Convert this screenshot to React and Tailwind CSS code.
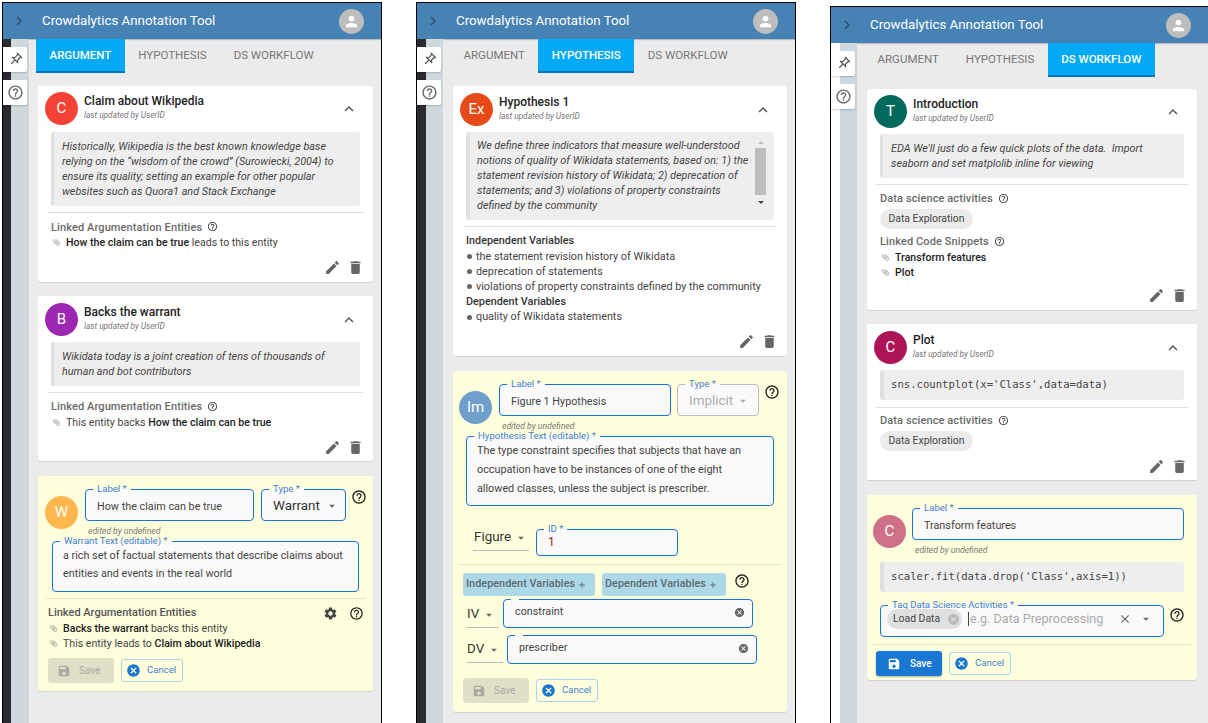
const P = {
  edit: "M3 17.25V21h3.75L17.81 9.94l-3.75-3.75L3 17.25zM20.71 7.04c.39-.39.39-1.02 0-1.41l-2.34-2.34c-.39-.39-1.02-.39-1.41 0l-1.83 1.83 3.75 3.75 1.83-1.83z",
  del: "M6 19c0 1.1.9 2 2 2h8c1.1 0 2-.9 2-2V7H6v12zM19 4h-3.5l-1-1h-5l-1 1H5v2h14V4z",
  save: "M17 3H5c-1.11 0-2 .9-2 2v14c0 1.1.89 2 2 2h14c1.1 0 2-.9 2-2V7l-4-4zm-5 16c-1.66 0-3-1.34-3-3s1.34-3 3-3 3 1.34 3 3-1.34 3-3 3zm3-10H5V5h10v4z",
  cancel: "M12 2C6.47 2 2 6.47 2 12s4.47 10 10 10 10-4.47 10-10S17.53 2 12 2zm5 13.59L15.59 17 12 13.41 8.41 17 7 15.59 10.59 12 7 8.41 8.41 7 12 10.59 15.59 7 17 8.41 13.41 12 17 15.59z",
  help: "M11 18h2v-2h-2v2zm1-16C6.48 2 2 6.48 2 12s4.48 10 10 10 10-4.48 10-10S17.52 2 12 2zm0 18c-4.41 0-8-3.59-8-8s3.59-8 8-8 8 3.59 8 8-3.59 8-8 8zm0-14c-2.21 0-4 1.79-4 4h2c0-1.1.9-2 2-2s2 .9 2 2c0 2-3 1.75-3 5h2c0-2.25 3-2.5 3-5 0-2.21-1.79-4-4-4z",
  gear: "M19.14 12.94c.04-.3.06-.61.06-.94 0-.32-.02-.64-.07-.94l2.03-1.58c.18-.14.23-.41.12-.61l-1.92-3.32c-.12-.22-.37-.29-.59-.22l-2.39.96c-.5-.38-1.03-.7-1.62-.94l-.36-2.54c-.04-.24-.24-.41-.48-.41h-3.84c-.24 0-.43.17-.47.41l-.36 2.54c-.59.24-1.13.57-1.62.94l-2.39-.96c-.22-.08-.47 0-.59.22L2.74 8.87c-.12.21-.08.47.12.61l2.03 1.58c-.05.3-.09.63-.09.94s.02.64.07.94l-2.03 1.58c-.18.14-.23.41-.12.61l1.92 3.32c.12.22.37.29.59.22l2.39-.96c.5.38 1.03.7 1.62.94l.36 2.54c.05.24.24.41.48.41h3.84c.24 0 .44-.17.47-.41l.36-2.54c.59-.24 1.13-.56 1.62-.94l2.39.96c.22.08.47 0 .59-.22l1.92-3.32c.12-.22.07-.47-.12-.61l-2.01-1.58zM12 15.6c-1.98 0-3.6-1.62-3.6-3.6s1.62-3.6 3.6-3.6 3.6 1.62 3.6 3.6-1.62 3.6-3.6 3.6z",
  clip: "M16.5 6v11.5c0 2.21-1.79 4-4 4s-4-1.79-4-4V5c0-1.38 1.12-2.5 2.5-2.5s2.5 1.12 2.5 2.5v10.5c0 .55-.45 1-1 1s-1-.45-1-1V6H10v9.5c0 1.38 1.12 2.5 2.5 2.5s2.5-1.12 2.5-2.5V5c0-2.21-1.79-4-4-4S7 2.79 7 5v12.5c0 3.04 2.46 5.5 5.5 5.5s5.5-2.46 5.5-5.5V6h-1.5z",
  person: "M12 12c2.21 0 4-1.79 4-4s-1.79-4-4-4-4 1.79-4 4 1.79 4 4 4zm0 2c-2.67 0-8 1.34-8 4v2h16v-2c0-2.66-5.33-4-8-4z",
  less: "M12 8l-6 6 1.41 1.41L12 10.83l4.59 4.58L18 14z",
  right: "M10 6L8.59 7.41 13.17 12l-4.58 4.59L10 18l6-6z",
  pin: "M14 4v5c0 1.12.37 2.16 1 3H9c.65-.86 1-1.9 1-3V4h4m3-2H7c-.55 0-1 .45-1 1s.45 1 1 1h1v5c0 1.66-1.34 3-3 3v2h5.97v7l1 1 1-1v-7H19v-2c-1.66 0-3-1.34-3-3V4h1c.55 0 1-.45 1-1s-.45-1-1-1z",
  drop: "M7 10l5 5 5-5z",
  close: "M19 6.41L17.59 5 12 10.59 6.41 5 5 6.41 10.59 12 5 17.59 6.41 19 12 13.41 17.59 19 19 17.59 13.41 12z",
  add: "M19 13h-6v6h-2v-6H5v-2h6V5h2v6h6v2z",
};

function I({ d, className = "" }) {
  return (
    <svg viewBox="0 0 24 24" className={"shrink-0 fill-current " + className}>
      <path d={P[d]} />
    </svg>
  );
}

function Phone({ rail, className, tabs, active, children }) {
  return (
    <div className={"flex flex-col border-l border-r border-t border-black bg-[#ebebeb] shrink-0 h-[730px] " + className}>
      <div className="flex items-center h-[36px] bg-[#4682b4] shrink-0 shadow-[0_1px_1px_rgba(0,0,0,0.2)]">
        <I d="right" className="w-[18px] h-[18px] ml-[7px] text-[#2f4f68]" />
        <div className="ml-[14px] text-[13.3px] text-white flex-1">Crowdalytics Annotation Tool</div>
        <div className="w-[25px] h-[25px] rounded-full bg-[#bdbdbd] flex items-center justify-center mr-[17px]">
          <I d="person" className="w-[17px] h-[17px] text-white" />
        </div>
      </div>
      <div className="flex flex-1 min-h-0">
        <div className={"w-[26px] shrink-0 flex flex-col gap-[8px] pt-[8px] " + rail}>
          <div className="w-[24px] h-[25px] bg-white rounded-r-[2px] shadow-[0_1px_2px_rgba(0,0,0,0.2)] flex items-center justify-center">
            <I d="pin" className="w-[15px] h-[15px] text-[#555] rotate-45" />
          </div>
          <div className="w-[24px] h-[25px] bg-white rounded-r-[2px] shadow-[0_1px_2px_rgba(0,0,0,0.2)] flex items-center justify-center">
            <I d="help" className="w-[17px] h-[17px] text-[#666]" />
          </div>
        </div>
        <div className="flex-1 min-w-0 flex flex-col">
          <div className="flex h-[34px] shrink-0 ml-[7px]">
            {tabs.map((t) => (
              <div
                key={t}
                className={
                  t === active
                    ? "flex items-center px-[13.5px] bg-[#03a9f4] border-b-2 border-[#0277bd] text-white font-medium text-[11.5px] leading-none pt-[2px]"
                    : "flex items-center px-[13.5px] text-[#777] text-[11.5px] leading-none" + (t === "DS WORKFLOW" ? " text-[#9a9a9a]" : "")
                }
              >
                {t}
              </div>
            ))}
          </div>
          {children}
        </div>
      </div>
    </div>
  );
}

function Avatar({ color, children }) {
  return (
    <div className={"w-[33px] h-[33px] rounded-full shrink-0 flex items-center justify-center text-white text-[15px] " + color}>
      {children}
    </div>
  );
}

function CardHead({ color, letter, title }) {
  return (
    <div className="flex items-center h-[33px] pl-[7px]">
      <Avatar color={color}>{letter}</Avatar>
      <div className="ml-[6px] flex-1 -mt-[2px]">
        <div className="text-[12px] font-medium leading-[15px] text-[#222]">{title}</div>
        <div className="text-[8.3px] italic leading-[12px] text-[#777]">last updated by UserID</div>
      </div>
      <I d="less" className="w-[18px] h-[18px] text-[#555] mr-[15px]" />
    </div>
  );
}

function Quote({ lines, className = "" }) {
  return (
    <div className={"mt-[7px] mx-[13px] bg-[#eeeeee] border-l-[3px] border-[#e0e0e0] rounded-[3px] py-[7px] pl-[8px] pr-[8px] text-[10.8px] leading-[15.1px] italic text-[#444] " + className}>
      {lines.map((l) => (
        <div key={l} className="whitespace-pre">{l}</div>
      ))}
    </div>
  );
}

function Code({ text }) {
  return (
    <div className="mx-[13px] bg-[#eeeeee] border-l-[4px] border-[#e0e0e0] rounded-[3px] h-[30px] flex items-center pl-[7px] text-[10.6px] text-[#444] whitespace-pre font-['DejaVu_Sans_Mono',monospace]">
      {text}
    </div>
  );
}

function Divider({ className = "" }) {
  return <div className={"h-px bg-[#e0e0e0] " + className} />;
}

function HeadRow({ children }) {
  return (
    <div className="flex items-center h-[15px] text-[11px] font-medium text-[#6a6a6a] tracking-[0.1px]">
      {children}
      <I d="help" className="w-[11px] h-[11px] ml-[5px] -mt-[2px] text-[#444]" />
    </div>
  );
}

function LinkRow({ children }) {
  return (
    <div className="flex items-center h-[15px] text-[10.6px] text-[#444] whitespace-pre">
      <I d="clip" className="w-[9px] h-[9px] text-[#999] -rotate-45 mr-[5px] ml-[1px]" />
      {children}
    </div>
  );
}

function Actions({ className = "" }) {
  return (
    <div className={"flex justify-end items-center gap-[6px] pr-[9px] " + className}>
      <I d="edit" className="w-[17px] h-[17px] text-[#666]" />
      <I d="del" className="w-[17px] h-[17px] text-[#666]" />
    </div>
  );
}

function Field({ label, className = "", muted = false, children }) {
  return (
    <fieldset className={"border-[1.4px] rounded-[4px] bg-[#fafafa] min-w-0 " + (muted ? "border-[#bdbdbd] " : "border-[#1976d2] ") + className}>
      <legend className={"ml-[7px] px-[4px] text-[9.6px] leading-[10px] " + (muted ? "text-[#4a7fc0]" : "text-[#3f7fd0]")}>{label}</legend>
      {children}
    </fieldset>
  );
}

function Btns({ enabled = false, className = "" }) {
  return (
    <div className={"flex items-center gap-[7px] " + className}>
      {enabled ? (
        <div className="w-[66px] h-[25px] rounded-[3px] bg-[#1976d2] flex items-center pl-[11px] text-white text-[10px] font-medium shadow-[0_1px_2px_rgba(0,0,0,0.3)]">
          <I d="save" className="w-[14px] h-[14px] mr-[9px]" />Save
        </div>
      ) : (
        <div className="w-[66px] h-[25px] rounded-[3px] bg-[#e0e0c8] flex items-center pl-[9px] text-[#a9a9a0] text-[10px]">
          <I d="save" className="w-[14px] h-[14px] mr-[8px]" />Save
        </div>
      )}
      <div className="w-[62px] h-[23px] rounded-[3px] border border-[#a8d4ee] flex items-center pl-[4px] text-[#3f7fd0] text-[9.6px]">
        <I d="cancel" className="w-[15px] h-[15px] text-[#1976d2] mr-[6px]" />Cancel
      </div>
    </div>
  );
}

function Help({ className = "" }) {
  return <I d="help" className={"w-[16px] h-[16px] text-[#222] " + className} />;
}

function Caret({ className = "" }) {
  return <I d="drop" className={"w-[14px] h-[14px] text-[#666] " + className} />;
}

function SmallSelect({ text, w, className = "" }) {
  return (
    <div className={"flex items-center h-[27px] border-b border-[#bbb] text-[13.4px] text-[#333] pl-[1px] " + w + " " + className}>
      {text}
      <Caret className="ml-[3px] mt-[2px]" />
    </div>
  );
}

const TABS = ["ARGUMENT", "HYPOTHESIS", "DS WORKFLOW"];

function First() {
  return (
    <Phone className="w-[380px] ml-[2px] mt-[2px]" rail="bg-[linear-gradient(90deg,#2a2a30_8px,#cfd8dc_8px)]" tabs={TABS} active="ARGUMENT">
      <div className="pl-[9px] pr-[8px] pt-[13px] flex flex-col">
        <div className="bg-white rounded-[3px] h-[196px] pt-[6px] shadow-[0_1px_1px_rgba(0,0,0,0.1)]">
          <CardHead color="bg-[#f44336]" letter="C" title="Claim about Wikipedia" />
          <Quote lines={["Historically, Wikipedia is the best known knowledge base", "relying on the “wisdom of the crowd” (Surowiecki, 2004) to", "ensure its quality; setting an example for other popular", "websites such as Quora1 and Stack Exchange"]} />
          <Divider className="mx-[10px] mt-[6px]" />
          <div className="pl-[13px] pt-[7px]">
            <HeadRow>Linked Argumentation Entities</HeadRow>
            <LinkRow><b className="font-medium text-[#222]">How the claim can be true</b> leads to this entity</LinkRow>
          </div>
          <Actions className="mt-[9px]" />
        </div>
        <div className="bg-white rounded-[3px] h-[165px] mt-[14px] pt-[7px] shadow-[0_1px_1px_rgba(0,0,0,0.1)]">
          <CardHead color="bg-[#9c27b0]" letter="B" title="Backs the warrant" />
          <Quote className="!mt-[6px]" lines={["Wikidata today is a joint creation of tens of thousands of", "human and bot contributors"]} />
          <Divider className="mx-[10px] mt-[6px]" />
          <div className="pl-[13px] pt-[7px]">
            <HeadRow>Linked Argumentation Entities</HeadRow>
            <LinkRow>This entity backs <b className="font-medium text-[#222]">How the claim can be true</b></LinkRow>
          </div>
          <Actions className="mt-[9px]" />
        </div>
        <div className="bg-[#ffffdd] rounded-[3px] h-[215px] mt-[15px] shadow-[0_1px_1px_rgba(0,0,0,0.1)] pt-[8px]">
          <div className="flex pl-[7px]">
            <div className="pt-[12px]"><Avatar color="bg-[#ffb74d]">W</Avatar></div>
            <div className="ml-[7px]">
              <div className="flex items-start">
                <Field label="Label *" className="w-[169px] h-[37px] text-[10.8px] text-[#444]"><div className="pl-[11px] pt-[5px]">How the claim can be true</div></Field>
                <Field label="Type *" className="w-[85px] h-[37px] ml-[7px] text-[13.4px] text-[#333]"><div className="pl-[11px] pt-[2px] flex items-center">Warrant<Caret className="ml-[5px]" /></div></Field>
                <Help className="ml-[5px] mt-[5px]" />
              </div>
              <div className="text-[8.6px] italic text-[#777] pl-[3px] leading-[12px] mt-[4px]">edited by undefined</div>
            </div>
          </div>
          <Field label="Warrant Text (editable) *" className="mx-[14px] -mt-[1px] h-[56px] text-[10.8px] leading-[18.4px] text-[#444]"><div className="pl-[10px] pt-[1px]">a rich set of factual statements that describe claims about<br />entities and events in the real world</div></Field>
          <Divider className="mx-[7px] mt-[6px] !bg-[#e6e6c8]" />
          <div className="pl-[10px] pr-[9px] pt-[7px]">
            <div className="flex items-center h-[15px] text-[11px] font-medium text-[#555]">
              <div className="flex-1">Linked Argumentation Entities</div>
              <I d="gear" className="w-[15px] h-[15px] text-[#444]" />
              <Help className="ml-[11px] !w-[15px] !h-[15px]" />
            </div>
            <LinkRow><b className="font-medium text-[#222]">Backs the warrant</b> backs this entity</LinkRow>
            <LinkRow>This entity leads to <b className="font-medium text-[#222]">Claim about Wikipedia</b></LinkRow>
            <Btns className="mt-[7px]" />
          </div>
        </div>
      </div>
    </Phone>
  );
}

function Bullet({ children }) {
  return (
    <div className="flex items-center h-[15.2px] text-[10.8px] text-[#444] whitespace-pre">
      <span className="w-[5px] h-[5px] rounded-full bg-[#666] ml-[1px] mr-[4px]" />{children}
    </div>
  );
}

function Second() {
  return (
    <Phone className="w-[380px] ml-[34px] mt-[2px]" rail="bg-[linear-gradient(90deg,#2a2a30_9px,#cfd8dc_9px)]" tabs={TABS} active="HYPOTHESIS">
      <div className="pl-[10px] pr-[8px] pt-[13px] flex flex-col">
        <div className="bg-white rounded-[3px] h-[270px] pt-[7px] shadow-[0_1px_1px_rgba(0,0,0,0.1)]">
          <CardHead color="bg-[#e64a19]" letter="Ex" title="Hypothesis 1" />
          <div className="mt-[6px] mx-[13px] bg-[#eeeeee] border-l-[4px] border-[#e0e0e0] rounded-[3px] h-[88px] pl-[7px] pr-[8px] flex">
            <div className="text-[10.8px] leading-[15.1px] italic text-[#444] pt-[6px] flex-1 whitespace-pre">
              We define three indicators that measure well-understood{"\n"}notions of quality of Wikidata statements, based on: 1) the{"\n"}statement revision history of Wikidata; 2) deprecation of{"\n"}statements; and 3) violations of property constraints{"\n"}defined by the community
            </div>
            <div className="w-[11px] flex flex-col items-center pt-[9px]">
              <span className="w-0 h-0 border-x-[3px] border-x-transparent border-b-[3px] border-b-[#bbb]" />
              <span className="w-[11px] h-[47px] bg-[#bdbdbd] mt-[4px]" />
              <span className="w-0 h-0 border-x-[3px] border-x-transparent border-t-[3px] border-t-[#444] mt-[6px]" />
            </div>
          </div>
          <Divider className="mx-[10px] mt-[6px]" />
          <div className="pl-[13px] pt-[7px]">
            <div className="h-[15px] flex items-center text-[10.8px] font-medium text-[#333]">Independent Variables</div>
            <Bullet>the statement revision history of Wikidata</Bullet>
            <Bullet>deprecation of statements</Bullet>
            <Bullet>violations of property constraints defined by the community</Bullet>
            <div className="h-[15px] flex items-center text-[10.8px] font-medium text-[#333]">Dependent Variables</div>
            <Bullet>quality of Wikidata statements</Bullet>
          </div>
          <Actions className="mt-[8px]" />
        </div>
        <div className="bg-[#ffffdd] rounded-[3px] h-[341px] mt-[15px] shadow-[0_1px_1px_rgba(0,0,0,0.1)] pt-[8px]">
          <div className="flex pl-[6px]">
            <div className="pt-[12px]"><Avatar color="bg-[#6f9fcb]">Im</Avatar></div>
            <div className="ml-[7px]">
              <div className="flex items-start">
                <Field label="Label *" className="w-[172px] h-[37px] text-[10.8px] text-[#444]"><div className="pl-[11px] pt-[5px]">Figure 1 Hypothesis</div></Field>
                <Field muted label="Type *" className="w-[82px] h-[37px] ml-[6px] text-[13.4px] text-[#aaa]"><div className="pl-[11px] pt-[2px] flex items-center">Implicit<Caret className="ml-[3px] !text-[#aaa]" /></div></Field>
                <Help className="ml-[5px] mt-[5px]" />
              </div>
              <div className="text-[8.6px] italic text-[#777] pl-[3px] leading-[12px] mt-[4px]">edited by undefined</div>
            </div>
          </div>
          <Field label="Hypothesis Text (editable) *" className="mx-[13px] -mt-[1px] h-[75px] text-[10.8px] leading-[19px] text-[#444]"><div className="pl-[10px]">The type constraint specifies that subjects that have an<br />occupation have to be instances of one of the eight<br />allowed classes, unless the subject is prescriber.</div></Field>
          <div className="flex items-start pl-[20px] mt-[18px]">
            <SmallSelect text="Figure" w="w-[56px]" />
            <Field label="ID *" className="w-[142px] h-[32px] ml-[7px] text-[12px] text-[#8b1a1a]"><div className="pl-[11px] pt-[1px] leading-[14px]">1</div></Field>
          </div>
          <Divider className="mx-[6px] mt-[8px] !bg-[#e6e6c8]" />
          <div className="flex items-start pl-[10px] mt-[8px]">
            <div className="h-[23px] w-[132px] bg-[#add8e6] rounded-[3px] flex items-center pl-[3px] text-[10.8px] font-medium text-[#5a6a72] tracking-[0.05px] whitespace-pre">Independent Variables<I d="add" className="w-[10px] h-[10px] ml-[2px]" /></div>
            <div className="h-[23px] w-[124px] ml-[7px] bg-[#add8e6] rounded-[3px] flex items-center pl-[3px] text-[10.8px] font-medium text-[#5a6a72] tracking-[0.05px] whitespace-pre">Dependent Variables<I d="add" className="w-[10px] h-[10px] ml-[2px]" /></div>
            <Help className="ml-[8px]" />
          </div>
          <div className="flex items-start pl-[13px] mt-[3px]">
            <SmallSelect text="IV" w="w-[33px] mt-[2px]" />
            <Field label="" className="w-[250px] h-[29px] ml-[4px] text-[10.8px] text-[#444]"><div className="pl-[11px] pr-[7px] flex items-center h-full -mt-[1px]"><span className="flex-1">constraint</span><I d="cancel" className="w-[11px] h-[11px] text-[#666]" /></div></Field>
          </div>
          <div className="flex items-start pl-[13px] mt-[7px]">
            <SmallSelect text="DV" w="w-[37px] mt-[1px]" />
            <Field label="" className="w-[250px] h-[29px] ml-[4px] text-[10.8px] text-[#444]"><div className="pl-[11px] pr-[7px] flex items-center h-full -mt-[1px]"><span className="flex-1">prescriber</span><I d="cancel" className="w-[11px] h-[11px] text-[#666]" /></div></Field>
          </div>
          <Btns className="ml-[10px] mt-[14px]" />
        </div>
      </div>
    </Phone>
  );
}

function Third() {
  return (
    <Phone className="w-[378px] ml-[34px] mt-[6px] !border-r-0" rail="bg-[linear-gradient(90deg,#ffffff_9px,#cfd8dc_9px)]" tabs={TABS} active="DS WORKFLOW">
      <div className="pl-[10px] pr-[11px] pt-[12px] flex flex-col">
        <div className="bg-white rounded-[3px] h-[221px] pt-[6px] shadow-[0_1px_1px_rgba(0,0,0,0.1)]">
          <CardHead color="bg-[#00695c]" letter="T" title="Introduction" />
          <Quote className="!mt-[6px]" lines={["EDA We'll just do a few quick plots of the data.  Import", "seaborn and set matplolib inline for viewing"]} />
          <Divider className="mx-[9px] mt-[6px]" />
          <div className="pl-[13px] pt-[7px]">
            <HeadRow>Data science activities</HeadRow>
            <div className="w-[93px] h-[20px] rounded-full bg-[#ebebeb] flex items-center justify-center text-[10.4px] text-[#444] mt-[2px]">Data Exploration</div>
            <div className="mt-[6px]"><HeadRow>Linked Code Snippets</HeadRow></div>
            <LinkRow><b className="font-medium text-[#222]">Transform features</b></LinkRow>
            <LinkRow><b className="font-medium text-[#222]">Plot</b></LinkRow>
          </div>
          <Actions className="mt-[7px]" />
        </div>
        <div className="bg-white h-[156px] mt-[14px] pt-[7px] shadow-[0_1px_1px_rgba(0,0,0,0.1)]">
          <CardHead color="bg-[#ad1457]" letter="C" title="Plot" />
          <div className="mt-[6px]"><Code text="sns.countplot(x='Class',data=data)" /></div>
          <Divider className="mx-[9px] mt-[7px]" />
          <div className="pl-[13px] pt-[6px]">
            <HeadRow>Data science activities</HeadRow>
            <div className="w-[93px] h-[20px] rounded-full bg-[#ebebeb] flex items-center justify-center text-[10.4px] text-[#444] mt-[2px]">Data Exploration</div>
          </div>
          <Actions className="mt-[7px]" />
        </div>
        <div className="bg-[#ffffdd] rounded-[3px] h-[185px] mt-[15px] shadow-[0_1px_1px_rgba(0,0,0,0.1)] pt-[8px]">
          <div className="flex pl-[6px]">
            <div className="pt-[12px]"><Avatar color="bg-[#cf7089]">C</Avatar></div>
            <div className="ml-[6px]">
              <Field label="Label *" className="w-[272px] h-[37px] text-[10.8px] text-[#444]"><div className="pl-[11px] pt-[5px]">Transform features</div></Field>
              <div className="text-[8.6px] italic text-[#777] pl-[3px] leading-[12px] mt-[4px]">edited by undefined</div>
            </div>
          </div>
          <div className="mt-[6px]"><Code text="scaler.fit(data.drop('Class',axis=1))" /></div>
          <div className="flex items-start mt-[8px] pl-[13px]">
            <Field label="Tag Data Science Activities *" className="w-[284px] h-[37px]">
              <div className="flex items-center pl-[6px] pr-[10px] -mt-[1px]">
                <div className="h-[20px] w-[75px] rounded-full bg-[#e0e0e0] flex items-center pl-[6px] text-[10.4px] text-[#444]"><span className="flex-1">Load Data</span><I d="cancel" className="w-[13px] h-[13px] text-[#bbb] mr-[2px]" /></div>
                <div className="ml-[6px] pl-[1px] border-l border-[#444] h-[14px] flex items-center text-[12.6px] text-[#aaa] flex-1 whitespace-pre">e.g. Data Preprocessing</div>
                <I d="close" className="w-[14px] h-[14px] text-[#666] mr-[7px]" />
                <Caret />
              </div>
            </Field>
            <Help className="ml-[5px] mt-[7px]" />
          </div>
          <Divider className="mx-[6px] mt-[7px] !bg-[#e6e6c8]" />
          <Btns enabled className="ml-[9px] mt-[6px]" />
        </div>
      </div>
    </Phone>
  );
}

export default function App() {
  return (
    <div className="flex w-[1208px] h-[723px] bg-white overflow-hidden font-['Roboto',sans-serif]">
      <First />
      <Second />
      <Third />
    </div>
  );
}
